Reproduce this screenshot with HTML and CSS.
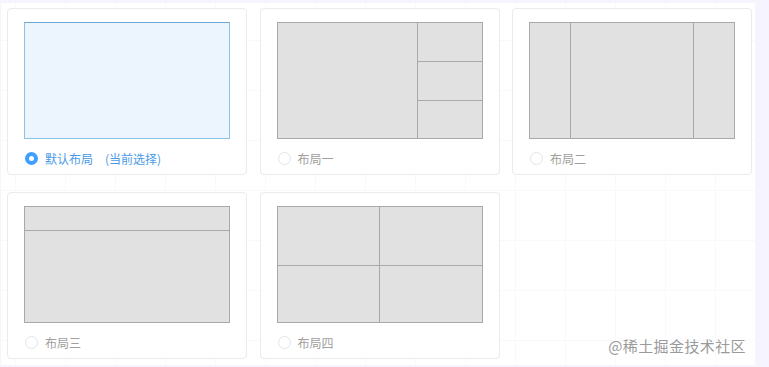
FILE: index.html
```html
<!DOCTYPE html>
<html lang="zh">
<head>
    <meta charset="UTF-8">
    <meta name="viewport" content="width=device-width, initial-scale=1.0">
    <title>布局选择</title>
    <link rel="stylesheet" href="styles.css">
</head>
<body>
    <div class="panel">
        <div class="layout-list">
            <!-- 默认布局 -->
            <div class="layout-card active">
                <div class="preview preview-default"></div>
                <label class="layout-radio">
                    <span class="radio-dot"></span>
                    <span class="radio-text">默认布局</span>
                    <span class="radio-note">(当前选择)</span>
                </label>
            </div>

            <!-- 布局一 -->
            <div class="layout-card">
                <div class="preview preview-one">
                    <div class="cell cell-main"></div>
                    <div class="cell"></div>
                    <div class="cell"></div>
                    <div class="cell"></div>
                </div>
                <label class="layout-radio">
                    <span class="radio-dot"></span>
                    <span class="radio-text">布局一</span>
                </label>
            </div>

            <!-- 布局二 -->
            <div class="layout-card">
                <div class="preview preview-two">
                    <div class="cell"></div>
                    <div class="cell"></div>
                    <div class="cell"></div>
                </div>
                <label class="layout-radio">
                    <span class="radio-dot"></span>
                    <span class="radio-text">布局二</span>
                </label>
            </div>

            <!-- 布局三 -->
            <div class="layout-card">
                <div class="preview preview-three">
                    <div class="cell"></div>
                    <div class="cell"></div>
                </div>
                <label class="layout-radio">
                    <span class="radio-dot"></span>
                    <span class="radio-text">布局三</span>
                </label>
            </div>

            <!-- 布局四 -->
            <div class="layout-card">
                <div class="preview preview-four">
                    <div class="cell"></div>
                    <div class="cell"></div>
                    <div class="cell"></div>
                    <div class="cell"></div>
                </div>
                <label class="layout-radio">
                    <span class="radio-dot"></span>
                    <span class="radio-text">布局四</span>
                </label>
            </div>
        </div>
        <div class="watermark">@稀土掘金技术社区</div>
    </div>
</body>
</html>
```

FILE: styles.css
```css
/* Genel */
body {
    margin: 0;
    background-color: #f6f4fe;
    font-family: "Noto Sans CJK SC", "Noto Sans", sans-serif;
    font-size: 12px;
}

.panel {
    position: relative;
    margin: 3px 14px 0 1px;
    height: 362px;
    background-color: #ffffff;
    background-image:
        linear-gradient(to right, #f9f9fb 1px, transparent 1px),
        linear-gradient(to bottom, #f9f9fb 1px, transparent 1px);
    background-size: 50px 50px;
    background-position: 14px 37px;
}

/* Kartlar */
.layout-list {
    display: grid;
    grid-template-columns: repeat(3, 240px);
    column-gap: 12.5px;
    row-gap: 17px;
    padding: 5px 0 0 6px;
}

.layout-card {
    box-sizing: border-box;
    height: 167px;
    padding: 13px 16px 0;
    background-color: #ffffff;
    border: 1px solid #ebebee;
    border-radius: 4px;
}

.preview {
    box-sizing: border-box;
    width: 206px;
    height: 117px;
    border: 1px solid #a9a9a9;
    background-color: #e1e1e1;
}

.preview-default {
    background-color: #ecf5fe;
    border-color: #8cc4e8;
    border-top-color: #6aaad8;
}

.cell {
    background-color: #e1e1e1;
}

.preview-one {
    display: grid;
    grid-template-columns: 140px 1fr;
    grid-template-rows: repeat(3, 1fr);
}

.preview-one .cell-main {
    grid-row: 1 / 4;
    border-right: 1px solid #a9a9a9;
}

.preview-one .cell:nth-child(3),
.preview-one .cell:nth-child(4) {
    border-top: 1px solid #a9a9a9;
}

.preview-two {
    display: grid;
    grid-template-columns: 40px 1fr 40px;
}

.preview-two .cell:nth-child(2) {
    border-left: 1px solid #a9a9a9;
    border-right: 1px solid #a9a9a9;
}

.preview-three {
    display: grid;
    grid-template-rows: 23px 1fr;
}

.preview-three .cell:nth-child(2) {
    border-top: 1px solid #a9a9a9;
}

.preview-four {
    display: grid;
    grid-template-columns: 102px 1fr;
    grid-template-rows: 58px 1fr;
}

.preview-four .cell:nth-child(odd) {
    border-right: 1px solid #a9a9a9;
}

.preview-four .cell:nth-child(3),
.preview-four .cell:nth-child(4) {
    border-top: 1px solid #a9a9a9;
}

/* Radio */
.layout-radio {
    display: flex;
    align-items: center;
    margin-top: 12px;
    height: 14px;
    color: #a0a0a0;
    cursor: pointer;
}

.radio-dot {
    box-sizing: border-box;
    width: 13px;
    height: 13px;
    margin: 0 7px 0 1px;
    border: 1px solid #e2e4ea;
    border-radius: 50%;
    background-color: #ffffff;
}

.active .layout-radio {
    color: #4a9ae8;
}

.active .radio-dot {
    border: 4px solid #409eff;
    background-color: #ffffff;
}

.radio-note {
    margin-left: 12px;
}

/* Filigran */
.watermark {
    position: absolute;
    right: 9px;
    bottom: 9px;
    font-size: 15px;
    color: #9a9a9a;
    letter-spacing: 0.4px;
    text-shadow: 0 0 2px #ffffff;
}
```
